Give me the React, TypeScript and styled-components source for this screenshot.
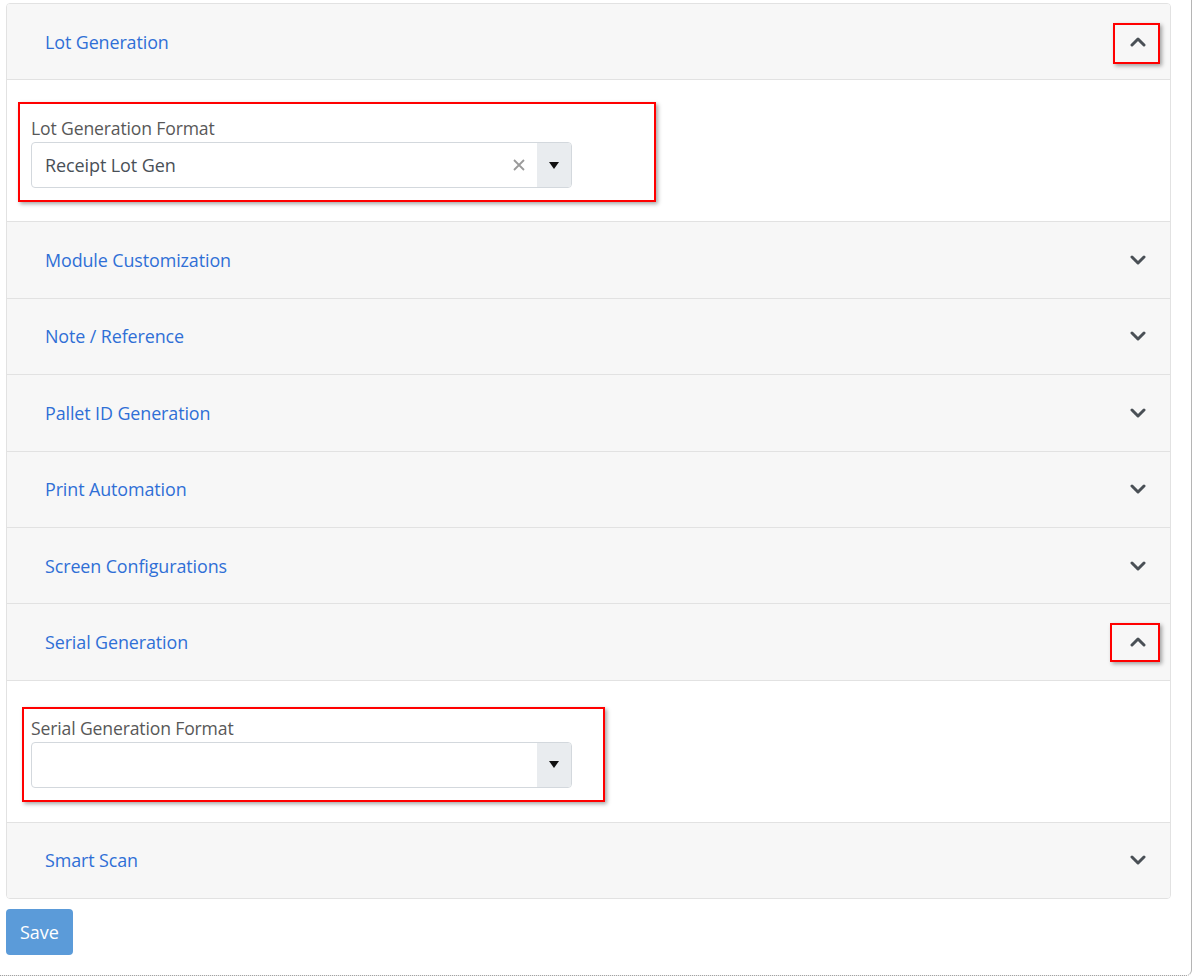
import React from "react";
import styled, { createGlobalStyle } from "styled-components";

const Global = createGlobalStyle`
  html, body { margin: 0; padding: 0; background: #fff; }
  body { font-family: "Open Sans", "Noto Sans", "Liberation Sans", sans-serif; }
  * { box-sizing: border-box; }
`;

const Frame = styled.div`
  width: 1192px;
  height: 976px;
  border-right: 1px solid #b5b5b5;
  border-bottom: 1px dotted #8f8f8f;
  border-bottom-right-radius: 6px;
  padding: 3px 20px 0 6px;
`;

const Card = styled.div`
  border: 1px solid #e2e2e2;
  border-radius: 4px;
  overflow: hidden;
`;

const Header = styled.div<{ $last?: boolean }>`
  height: ${(p) => (p.$last ? 75 : 76.4)}px;
  background: #f7f7f7;
  border-bottom: ${(p) => (p.$last ? "none" : "1px solid #e2e2e2")};
  display: flex;
  align-items: center;
  justify-content: space-between;
  padding: 0 24px 0 38px;
`;

const Title = styled.span`
  color: #2f6fd6;
  font-size: 17.9px;
  letter-spacing: -0.1px;
`;

const IconWrap = styled.span<{ $mark?: { l: number; t: number; w: number; h: number } }>`
  position: relative;
  display: flex;
  align-items: center;
  justify-content: center;
  width: 16px;
  height: 16px;
  color: #4a5056;
  &::after {
    content: "";
    display: ${(p) => (p.$mark ? "block" : "none")};
    position: absolute;
    left: ${(p) => p.$mark?.l ?? 0}px;
    top: ${(p) => p.$mark?.t ?? 0}px;
    width: ${(p) => p.$mark?.w ?? 0}px;
    height: ${(p) => p.$mark?.h ?? 0}px;
    border: 2px solid #f00;
    box-shadow: 2px 2px 4px rgba(0, 0, 0, 0.35);
  }
`;

const Body = styled.div<{ $pt: number; $pb: number; $pl: number }>`
  background: #fff;
  border-bottom: 1px solid #e2e2e2;
  padding: ${(p) => p.$pt}px 0 ${(p) => p.$pb}px ${(p) => p.$pl}px;
`;

const Marked = styled.div<{ $w: number; $pl: number; $pt: number; $pb: number }>`
  width: ${(p) => p.$w}px;
  border: 2px solid #f00;
  box-shadow: 2px 2px 4px rgba(0, 0, 0, 0.35);
  padding: ${(p) => p.$pt}px 0 ${(p) => p.$pb}px ${(p) => p.$pl}px;
`;

const Label = styled.div`
  color: #585858;
  font-size: 17.6px;
  line-height: 22px;
  margin-bottom: 3px;
  letter-spacing: -0.15px;
`;

const Select = styled.div`
  width: 541px;
  height: 46px;
  border: 1px solid #d3d8dd;
  border-radius: 4px;
  display: flex;
  align-items: stretch;
  overflow: hidden;
`;

const Value = styled.div`
  flex: 1;
  display: flex;
  align-items: center;
  padding-left: 13px;
  color: #495057;
  font-size: 18px;
  letter-spacing: -0.1px;
`;

const Clear = styled.div`
  width: 36px;
  display: flex;
  align-items: center;
  justify-content: center;
  color: #9a9a9a;
`;

const Toggle = styled.div`
  width: 34px;
  background: #e9ecef;
  display: flex;
  align-items: center;
  justify-content: center;
`;

const SaveButton = styled.button`
  margin-top: 10px;
  width: 67px;
  height: 46px;
  border: none;
  border-radius: 4px;
  background: #5b9bd9;
  color: #fff;
  font-family: inherit;
  font-size: 18px;
  padding: 0;
`;

const ChevronDown = () => (
  <svg width="16" height="10" viewBox="0 0 16 10">
    <path d="M2 2 L8 8 L14 2" fill="none" stroke="currentColor" strokeWidth="3" strokeLinecap="round" strokeLinejoin="round" />
  </svg>
);
const ChevronUp = () => (
  <svg width="16" height="10" viewBox="0 0 16 10">
    <path d="M2 8 L8 2 L14 8" fill="none" stroke="currentColor" strokeWidth="3" strokeLinecap="round" strokeLinejoin="round" />
  </svg>
);

const Caret = () => (
  <svg width="10" height="7" viewBox="0 0 10 7">
    <path d="M0 0 H10 L5 7 Z" fill="#111" />
  </svg>
);

const Cross = () => (
  <svg width="12" height="12" viewBox="0 0 12 12">
    <path d="M1 1 L11 11 M11 1 L1 11" stroke="currentColor" strokeWidth="1.8" />
  </svg>
);

type Mark = { l: number; t: number; w: number; h: number };
type Section = { title: string; open?: boolean; mark?: Mark };

const sections: Section[] = [
  { title: "Lot Generation", open: true, mark: { l: -17, t: -11, w: 43, h: 37 } },
  { title: "Module Customization" },
  { title: "Note / Reference" },
  { title: "Pallet ID Generation" },
  { title: "Print Automation" },
  { title: "Screen Configurations" },
  { title: "Serial Generation", open: true, mark: { l: -20, t: -11, w: 46, h: 35 } },
  { title: "Smart Scan" },
];

export default function App() {
  return (
    <>
      <Global />
      <Frame>
        <Card>
          {sections.map((s, i) => (
            <React.Fragment key={s.title}>
              <Header $last={i === sections.length - 1}>
                <Title>{s.title}</Title>
                <IconWrap $mark={s.mark}>{s.open ? <ChevronUp /> : <ChevronDown />}</IconWrap>
              </Header>
              {s.title === "Lot Generation" && (
                <Body $pt={22} $pb={19} $pl={11}>
                  <Marked $w={638} $pl={11} $pt={13} $pb={12}>
                    <Label>Lot Generation Format</Label>
                    <Select>
                      <Value>Receipt Lot Gen</Value>
                      <Clear>
                        <Cross />
                      </Clear>
                      <Toggle>
                        <Caret />
                      </Toggle>
                    </Select>
                  </Marked>
                </Body>
              )}
              {s.title === "Serial Generation" && (
                <Body $pt={26} $pb={20} $pl={15}>
                  <Marked $w={583} $pl={7} $pt={8} $pb={12}>
                    <Label>Serial Generation Format</Label>
                    <Select>
                      <Value />
                      <Toggle>
                        <Caret />
                      </Toggle>
                    </Select>
                  </Marked>
                </Body>
              )}
            </React.Fragment>
          ))}
        </Card>
        <SaveButton>Save</SaveButton>
      </Frame>
    </>
  );
}
